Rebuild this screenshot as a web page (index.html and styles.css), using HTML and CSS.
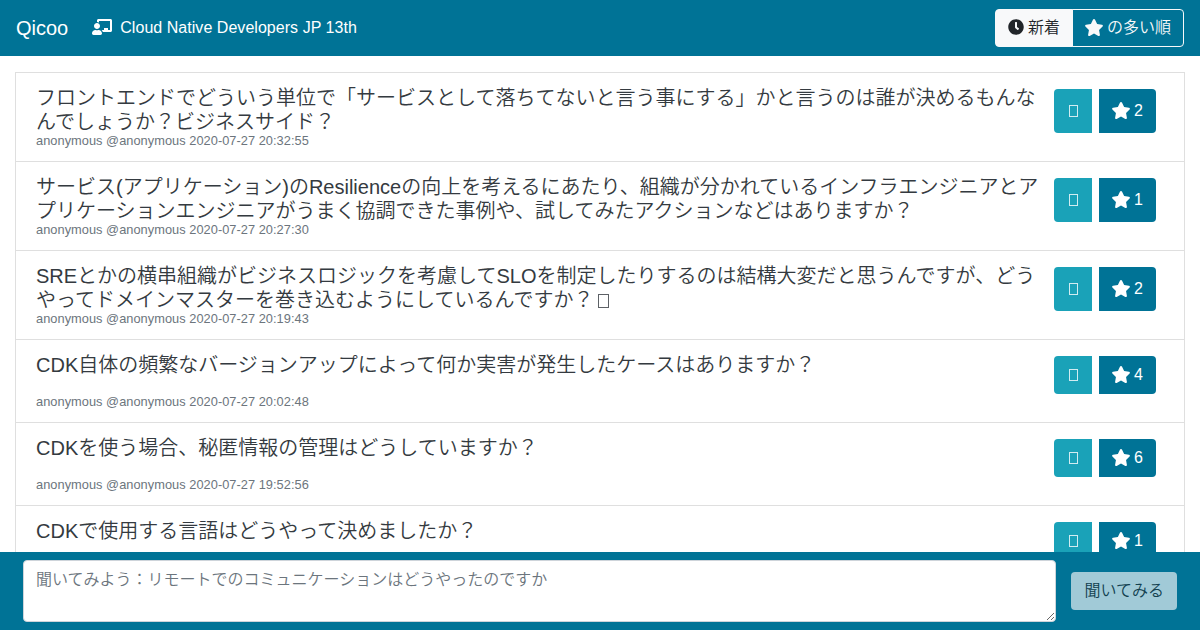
FILE: index.html
```html
<!DOCTYPE html>
<html lang="ja">

<head>
    <meta charset="UTF-8">
    <meta name="viewport" content="width=device-width, initial-scale=1.0">
    <title>Qicoo</title>
    <link rel="stylesheet" href="styles.css">
</head>

<body>
    <svg class="sprite">
        <symbol id="star" viewBox="20 0 536 512">
            <path d="M259.3 17.8L194 150.2 47.9 171.5c-26.2 3.8-36.7 36.1-17.7 54.6l105.7 103-25 145.5c-4.5 26.3 23.2 46 46.4 33.7L288 439.6l130.7 68.7c23.2 12.2 50.9-7.4 46.4-33.7l-25-145.5 105.7-103c19-18.5 8.5-50.8-17.7-54.6L382 150.2 316.7 17.8c-11.7-23.6-45.6-23.9-57.4 0z" />
        </symbol>
    </svg>

    <nav class="navbar">
        <a class="brand">Qicoo</a>
        <svg class="icon-event" viewBox="0 0 640 512">
            <path d="M208 352c-2.39 0-4.78.35-7.06 1.09C187.98 357.3 174.35 360 160 360c-14.35 0-27.98-2.7-40.95-6.91-2.28-.74-4.66-1.09-7.05-1.09C49.94 352-.33 402.48 0 464.62.14 490.88 21.73 512 48 512h224c26.27 0 47.86-21.12 48-47.38.33-62.14-49.94-112.62-112-112.62zm-48-32c53.02 0 96-42.98 96-96s-42.98-96-96-96-96 42.98-96 96 42.98 96 96 96zM592 0H208c-26.47 0-48 22.25-48 49.59V96c23.42 0 45.1 6.78 64 17.8V64h352v288h-64v-64H384v64h-76.24c19.1 16.69 33.12 38.73 39.69 64H592c26.47 0 48-22.25 48-49.59V49.59C640 22.25 618.47 0 592 0z" />
        </svg>
        <span class="event">Cloud Native Developers JP 13th</span>
        <div class="sort">
            <button class="sort-btn active">
                <svg class="icon-clock" viewBox="0 0 512 512">
                    <path d="M256 8C119 8 8 119 8 256s111 248 248 248 248-111 248-248S393 8 256 8zm92.49 313l-20 25a16 16 0 0 1-22.49 2.5l-67-49.72a40 40 0 0 1-15-31.23V112a16 16 0 0 1 16-16h32a16 16 0 0 1 16 16v144l58 42.5a16 16 0 0 1 2.49 22.5z" />
                </svg>新着</button>
            <button class="sort-btn"><svg class="icon-star"><use href="#star" /></svg>の多い順</button>
        </div>
    </nav>

    <main class="questions">
        <div class="question">
            <div class="body">
                <h5>フロントエンドでどういう単位で「サービスとして落ちてないと言う事にする」かと言うのは誰が決めるもんなんでしょうか？ビジネスサイド？</h5>
                <small>anonymous @anonymous 2020-07-27 20:32:55</small>
            </div>
            <div class="actions">
                <button class="btn reply"><span class="glyph"></span></button>
                <button class="btn like"><svg class="icon-star"><use href="#star" /></svg>2</button>
            </div>
        </div>
        <div class="question">
            <div class="body">
                <h5>サービス(アプリケーション)のResilienceの向上を考えるにあたり、組織が分かれているインフラエンジニアとアプリケーションエンジニアがうまく協調できた事例や、試してみたアクションなどはありますか？</h5>
                <small>anonymous @anonymous 2020-07-27 20:27:30</small>
            </div>
            <div class="actions">
                <button class="btn reply"><span class="glyph"></span></button>
                <button class="btn like"><svg class="icon-star"><use href="#star" /></svg>1</button>
            </div>
        </div>
        <div class="question">
            <div class="body">
                <h5>SREとかの横串組織がビジネスロジックを考慮してSLOを制定したりするのは結構大変だと思うんですが、どうやってドメインマスターを巻き込むようにしているんですか？<span class="glyph"></span></h5>
                <small>anonymous @anonymous 2020-07-27 20:19:43</small>
            </div>
            <div class="actions">
                <button class="btn reply"><span class="glyph"></span></button>
                <button class="btn like"><svg class="icon-star"><use href="#star" /></svg>2</button>
            </div>
        </div>
        <div class="question">
            <div class="body">
                <h5>CDK自体の頻繁なバージョンアップによって何か実害が発生したケースはありますか？</h5>
                <small>anonymous @anonymous 2020-07-27 20:02:48</small>
            </div>
            <div class="actions">
                <button class="btn reply"><span class="glyph"></span></button>
                <button class="btn like"><svg class="icon-star"><use href="#star" /></svg>4</button>
            </div>
        </div>
        <div class="question">
            <div class="body">
                <h5>CDKを使う場合、秘匿情報の管理はどうしていますか？</h5>
                <small>anonymous @anonymous 2020-07-27 19:52:56</small>
            </div>
            <div class="actions">
                <button class="btn reply"><span class="glyph"></span></button>
                <button class="btn like"><svg class="icon-star"><use href="#star" /></svg>6</button>
            </div>
        </div>
        <div class="question">
            <div class="body">
                <h5>CDKで使用する言語はどうやって決めましたか？</h5>
            </div>
            <div class="actions">
                <button class="btn reply"><span class="glyph"></span></button>
                <button class="btn like"><svg class="icon-star"><use href="#star" /></svg>1</button>
            </div>
        </div>
    </main>

    <form class="ask">
        <textarea placeholder="聞いてみよう：リモートでのコミュニケーションはどうやったのですか"></textarea>
        <button class="btn submit" type="submit" disabled>聞いてみる</button>
    </form>
</body>

</html>
```
FILE: styles.css
```css
* {
    box-sizing: border-box;
}

body {
    margin: 0;
    height: 100vh;
    display: flex;
    flex-direction: column;
    overflow: hidden;
    font-family: "Liberation Sans", "Noto Sans CJK JP", sans-serif;
    font-size: 16px;
    font-weight: 350;
    line-height: 24px;
    color: #212529;
    background-color: #fff;
}

button,
textarea {
    font: inherit;
}

svg {
    fill: currentColor;
    flex: none;
}

.sprite {
    display: none;
}

.navbar {
    flex: none;
    display: flex;
    align-items: center;
    height: 56px;
    padding: 0 16px;
    color: #fff;
    background-color: #007396;
}

.brand {
    font-size: 20px;
    margin-right: 24px;
}

.event {
    letter-spacing: 0.04px;
}

.icon-event {
    width: 20px;
    height: 16px;
    margin: 0 8px 2px 0;
}

.icon-star {
    width: 18px;
    height: 17px;
    margin: 0 4px 1px 0;
}

.icon-clock {
    width: 16px;
    height: 16px;
    margin: 0 4px 2px 0;
}

.sort {
    display: flex;
    margin-left: auto;
}

.sort-btn {
    display: flex;
    align-items: center;
    height: 38px;
    padding: 0 12px;
    color: #f8f9fa;
    background: none;
    border: 1px solid #f8f9fa;
    border-radius: 0 4px 4px 0;
}

.sort-btn.active {
    color: #212529;
    background-color: #f8f9fa;
    border-radius: 4px 0 0 4px;
    margin-right: -1px;
}

.questions {
    flex: 1;
    min-height: 0;
    overflow: hidden;
    padding: 16px 15px 0;
}

.question {
    display: flex;
    justify-content: space-between;
    padding: 12px 20px;
    border: 1px solid #dfdfdf;
    border-bottom: none;
}

.body {
    display: flex;
    flex-direction: column;
    justify-content: space-between;
    width: 1010px;
    min-height: 58px;
}

h5 {
    margin: 1px 0 -1px;
    font-size: 20px;
    font-weight: inherit;
    line-height: 24px;
    color: #343a40;
}

small {
    font-size: 12.8px;
    letter-spacing: 0.04px;
    line-height: 16px;
    color: #6c757d;
}

.actions {
    display: flex;
    gap: 7px;
    padding: 4px 8px 16px 0;
}

.btn {
    display: flex;
    align-items: center;
    justify-content: center;
    padding: 0 13px;
    color: #fff;
    border: none;
    border-radius: 4px;
}

.reply {
    width: 38px;
    background-color: #1aa2b8;
    border-radius: 4px 0 0 4px;
}

.like {
    width: 57px;
    background-color: #007396;
    border-radius: 0 4px 4px 0;
}

/* empty box used as a glyph */
.glyph {
    display: inline-block;
    width: 9px;
    height: 12px;
    border: 1px solid currentColor;
    opacity: 0.8;
}

h5 .glyph {
    width: 11px;
    height: 14px;
    margin-left: 5px;
    vertical-align: -1px;
}

.ask {
    flex: none;
    display: flex;
    align-items: center;
    gap: 15px;
    height: 78px;
    padding: 0 23px;
    background-color: #007396;
}

textarea {
    flex: 1;
    height: 62px;
    padding: 7px 12px 5px;
    border: 1px solid #ced4da;
    border-radius: 4px;
    background-color: #fff;
    resize: vertical;
}

textarea::placeholder {
    color: #6c757d;
}

.submit {
    height: 38px;
    color: #212529;
    background-color: #f8f9fa;
    opacity: 0.65;
}
```
